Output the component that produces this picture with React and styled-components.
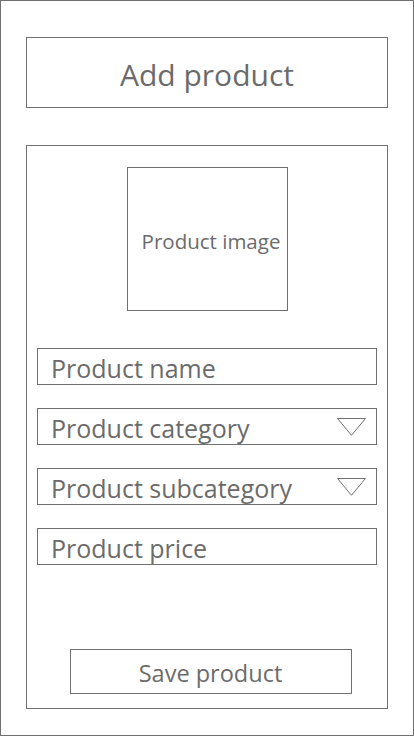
import React from 'react';
import styled, { createGlobalStyle } from 'styled-components';

const GlobalStyle = createGlobalStyle`
  html, body {
    margin: 0;
    padding: 0;
    background: #fff;
  }

  * {
    box-sizing: border-box;
  }
`;

const line = '#707070';
const ink = '#6b6b6b';

const Frame = styled.div`
  width: 414px;
  height: 736px;
  border: 1px solid ${line};
  padding: 36px 25px 0;
  display: flex;
  flex-direction: column;
  gap: 37px;
  font-family: 'Open Sans', 'Noto Sans', sans-serif;
  color: ${ink};
`;

const Header = styled.div`
  height: 71px;
  border: 1px solid ${line};
  display: flex;
  align-items: center;
  justify-content: center;
  font-size: 30px;
  padding-top: 3px;
`;

const Card = styled.div`
  height: 564px;
  border: 1px solid ${line};
  padding: 21px 10px 14px;
  display: flex;
  flex-direction: column;
  align-items: center;
`;

const ImageBox = styled.div`
  width: 161px;
  height: 144px;
  border: 1px solid ${line};
  display: flex;
  align-items: center;
  justify-content: center;
  padding: 4px 0 0 8px;
  font-size: 20.5px;
  white-space: nowrap;
  margin-bottom: 37px;
`;

const Fields = styled.div`
  width: 100%;
  display: flex;
  flex-direction: column;
  gap: 23px;
`;

const Field = styled.div`
  height: 37px;
  border: 1px solid ${line};
  display: flex;
  align-items: center;
  justify-content: space-between;
  padding: 2px 10px 0 13px;
  font-size: 25px;
  white-space: nowrap;
`;

const Caret = styled.svg`
  width: 29px;
  height: 18px;
  margin-top: -2px;
  flex: none;
`;

const SaveButton = styled.button`
  margin-top: auto;
  margin-left: 7px;
  width: 282px;
  height: 45px;
  border: 1px solid ${line};
  background: #fff;
  font-family: inherit;
  font-size: 23.5px;
  color: ${ink};
  padding: 2px 0 0;
`;

function Dropdown({ label }) {
  return (
    <Field>
      <span>{label}</span>
      <Caret viewBox="0 0 29 18">
        <polygon points="0.5,0.5 28.5,0.5 14.5,17.3" fill="none" stroke={line} strokeWidth="1" />
      </Caret>
    </Field>
  );
}

export default function App() {
  return (
    <>
      <GlobalStyle />
      <Frame>
        <Header>Add product</Header>
        <Card>
          <ImageBox>Product image</ImageBox>
          <Fields>
            <Field>Product name</Field>
            <Dropdown label="Product category" />
            <Dropdown label="Product subcategory" />
            <Field>Product price</Field>
          </Fields>
          <SaveButton>Save product</SaveButton>
        </Card>
      </Frame>
    </>
  );
}
